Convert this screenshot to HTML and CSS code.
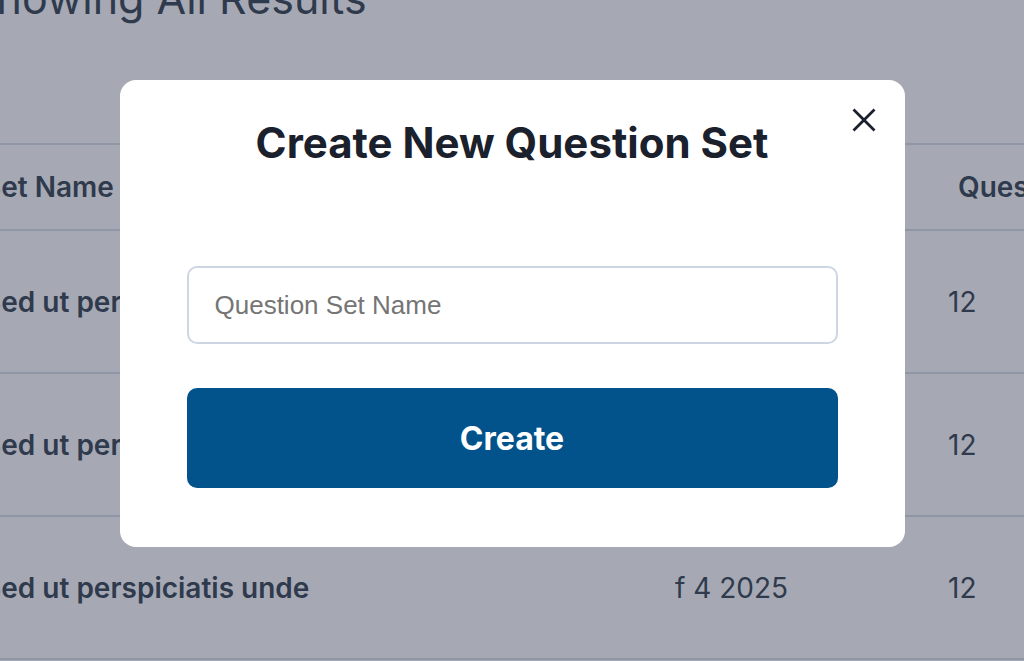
FILE: index.html
```html
<!DOCTYPE html>
<html lang="en">
<head>
<meta charset="utf-8">
<title>Create New Question Set</title>
<link rel="stylesheet" href="styles.css">
</head>
<body>
<div class="page">
  <h1 class="page-title">Showing All Results</h1>
  <div class="results">
    <div class="row row-head">
      <div class="cell cell-name">Set Name</div>
      <div class="cell cell-date">Date Created</div>
      <div class="cell cell-count cell-count-head">Questions</div>
    </div>
    <div class="row">
      <div class="cell cell-name">Sed ut perspiciatis unde</div>
      <div class="cell cell-date">f 4 2025</div>
      <div class="cell cell-count">12</div>
    </div>
    <div class="row">
      <div class="cell cell-name">Sed ut perspiciatis unde</div>
      <div class="cell cell-date">f 4 2025</div>
      <div class="cell cell-count">12</div>
    </div>
    <div class="row">
      <div class="cell cell-name">Sed ut perspiciatis unde</div>
      <div class="cell cell-date">f 4 2025</div>
      <div class="cell cell-count">12</div>
    </div>
  </div>
</div>

<div class="overlay">
  <div class="modal">
    <button class="modal-close" type="button" aria-label="Close">
      <svg width="24" height="24" viewBox="0 0 24 24" aria-hidden="true">
        <path d="M1.5 1.5 L22.5 22.5 M22.5 1.5 L1.5 22.5" stroke="#1a202c" stroke-width="2.8" stroke-linecap="butt" fill="none"/>
      </svg>
    </button>
    <h2 class="modal-title">Create New Question Set</h2>
    <input class="modal-input" type="text" placeholder="Question Set Name">
    <button class="modal-submit" type="button">Create</button>
  </div>
</div>
</body>
</html>
```

FILE: styles.css
```css
html, body {
  margin: 0;
  padding: 0;
}

body {
  width: 1024px;
  height: 661px;
  overflow: hidden;
  background: #a6a9b4;
  font-family: Inter, Roboto, "Liberation Sans", Arial, sans-serif;
  color: #2f3a4d;
}

.page {
  margin-left: -17px;
  width: 1100px;
}

.page-title {
  margin: -26px 0 0 -14px;
  font-size: 43px;
  line-height: 48px;
  font-weight: 400;
  color: #2f3a4d;
  white-space: nowrap;
}

.results {
  margin-top: 121px;
  border-top: 2px solid #8f96a6;
}

.row {
  display: grid;
  grid-template-columns: 692px 273px 1fr;
  align-items: center;
  height: 141px;
  border-bottom: 2px solid #8f96a6;
  font-size: 28px;
}

.row-head {
  height: 84px;
}

.cell-name {
  font-weight: 600;
  white-space: nowrap;
}

.cell-date,
.cell-count {
  font-weight: 400;
}

.row-head .cell {
  font-weight: 600;
}

.cell-count-head {
  padding-left: 10px;
}

.overlay {
  position: fixed;
  inset: 0;
  display: flex;
  justify-content: center;
  align-items: flex-start;
  padding-top: 80px;
}

.modal {
  position: relative;
  box-sizing: border-box;
  width: 785px;
  height: 467px;
  padding: 39px 67px 0;
  background: #ffffff;
  border-radius: 16px;
  display: flex;
  flex-direction: column;
}

.modal-close {
  position: absolute;
  top: 28px;
  right: 29px;
  width: 24px;
  height: 24px;
  padding: 0;
  border: 0;
  background: none;
  cursor: pointer;
}

.modal-close svg {
  display: block;
}

.modal-title {
  margin: 0 0 99px;
  text-align: center;
  font-size: 42px;
  line-height: 48px;
  font-weight: 700;
  color: #1a202c;
}

.modal-input {
  box-sizing: border-box;
  width: 100%;
  height: 78px;
  margin: 0 0 44px;
  padding: 0 26px;
  border: 2px solid #cfd6e3;
  border-radius: 10px;
  font-family: "Liberation Sans", Arial, sans-serif;
  font-size: 26px;
  color: #1a202c;
  background: #fff;
  outline: none;
}

.modal-input::placeholder {
  color: #757575;
}

.modal-submit {
  box-sizing: border-box;
  width: 100%;
  height: 100px;
  border: 0;
  border-radius: 10px;
  background: #02538b;
  color: #ffffff;
  font-family: Inter, Roboto, "Liberation Sans", Arial, sans-serif;
  font-size: 32px;
  font-weight: 700;
  cursor: pointer;
}
```
